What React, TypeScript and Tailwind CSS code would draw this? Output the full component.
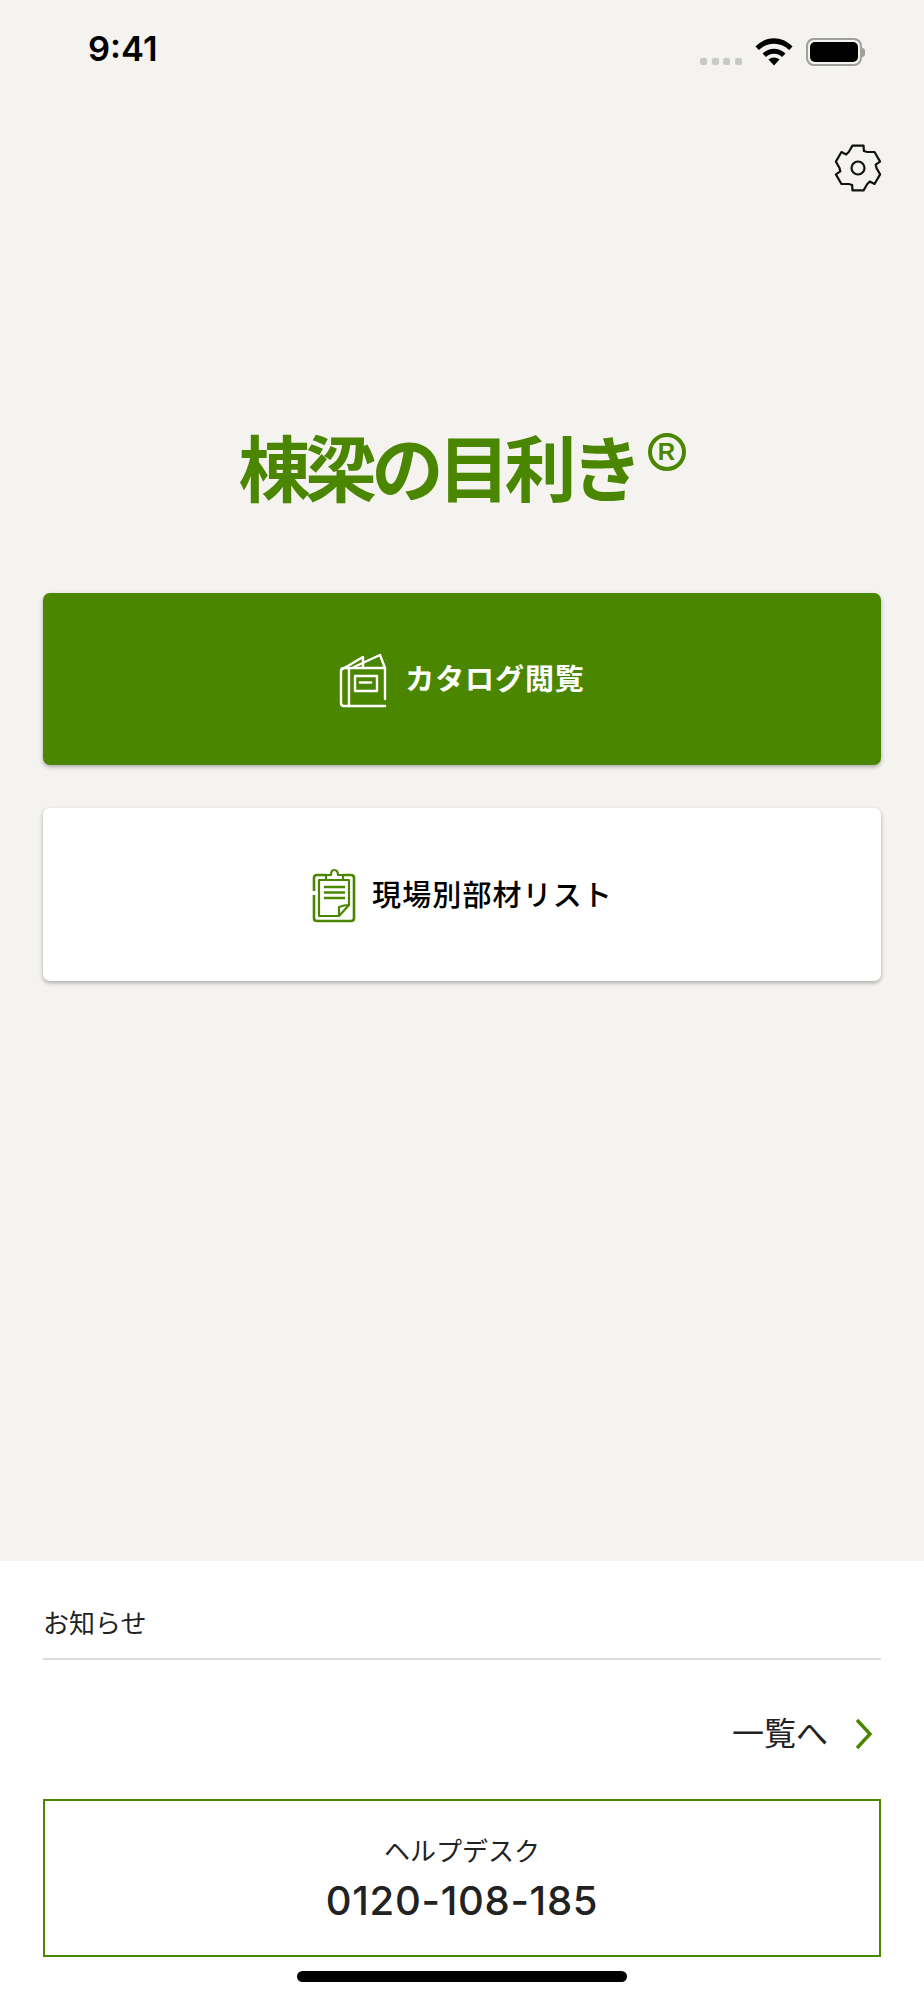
const JP = { fontFamily: '"Noto Sans CJK JP", sans-serif' };

function gearPath() {
  const pts: string[] = [];
  for (let i = 0; i < 6; i++) {
    const c = -90 + i * 60;
    const at = (deg: number, r: number) => {
      const a = ((c + deg) * Math.PI) / 180;
      return `${(33 + r * Math.cos(a)).toFixed(2)} ${(33 + r * Math.sin(a)).toFixed(2)}`;
    };
    pts.push(at(-14, 23), at(14, 23), at(19, 18), at(30, 18.5));
  }
  return `M${pts.join(' L')} Z`;
}

function Gear() {
  return (
    <svg width="66" height="66" viewBox="0 0 66 66" fill="none" stroke="#111" strokeWidth="2.2" strokeLinejoin="round">
      <path d={gearPath()} />
      <circle cx="33" cy="33" r="6.5" />
    </svg>
  );
}

function Wifi() {
  return (
    <svg width="38" height="28" viewBox="0 0 38 28" fill="#000">
      <path d="M0.5 8.5 C11 -2.5 27 -2.5 37.5 8.5 L34.2 12 C25.5 3.5 12.5 3.5 3.8 12 Z" />
      <path d="M7.5 15.5 C14 9 24 9 30.5 15.5 L27 19 C22.5 14.8 15.5 14.8 11 19 Z" />
      <path d="M13.5 21.5 C16.5 18.7 21.5 18.7 24.5 21.5 L19 27.5 Z" />
    </svg>
  );
}

function BookIcon() {
  return (
    <svg width="66" height="66" viewBox="0 0 66 66" fill="none" stroke="#fff" strokeWidth="2.4" strokeLinejoin="round" strokeLinecap="round">
      <path d="M55 60 H14 C12 60 11 59 11 57 V25 C11 23 12 22 14 22 H55 V53" />
      <path d="M19 22 V60" />
      <path d="M11 24 L33 11 L33 21" />
      <path d="M24 21 L50 9 L55 22" />
      <rect x="25" y="30" width="22" height="15" />
      <path d="M30 36.5 H41" />
    </svg>
  );
}

function ClipIcon() {
  return (
    <svg width="66" height="66" viewBox="0 0 66 66" fill="none" stroke="#4b8600" strokeWidth="2.2" strokeLinejoin="round">
      <path d="M24 13 H15 C13 13 12 14 12 16 V29 M12 33 V56 C12 58 13 59 15 59 H49 C51 59 52 58 52 56 V16 C52 14 51 13 49 13 H41" strokeWidth="2.6" />
      <path d="M24 13 H29 C29 9 30 8 32 8 C34 8 36 9 36 13 H41 V18 H24 Z" />
      <path d="M17 18 H24 M41 18 H47 V43 L37 54 H17 V18 Z" />
      <path d="M37 54 L37 45 C42 43 44 43 47 43" />
      <path d="M22 25 H43 M22 30.5 H43 M22 36 H43" strokeWidth="2.4" />
    </svg>
  );
}

export default function App() {
  return (
    <div className="relative flex h-[2000px] w-[924px] flex-col overflow-hidden bg-[#f4f3ef]" style={JP}>
      <div className="flex h-[135px] shrink-0 items-start justify-between pl-[88px] pr-[59px] pt-[26px]">
        <span className="text-[34.5px] font-semibold leading-[46px] text-black" style={{ fontFamily: 'Inter, sans-serif' }}>9:41</span>
        <div className="flex h-[40px] items-end pt-[12px]">
          <div className="mb-[1px] flex gap-[4.6px]">
            <span className="h-[7px] w-[7px] rounded-[2px] bg-[#c8c8c4]" />
            <span className="h-[7px] w-[7px] rounded-[2px] bg-[#c8c8c4]" />
            <span className="h-[7px] w-[7px] rounded-[2px] bg-[#c8c8c4]" />
            <span className="h-[7px] w-[7px] rounded-[2px] bg-[#c8c8c4]" />
          </div>
          <div className="ml-[13px]"><Wifi /></div>
          <div className="ml-[13px] flex items-center">
            <div className="h-[28px] w-[56px] rounded-[8px] border-2 border-[#a0a09a] p-[2px]">
              <div className="h-full w-full rounded-[5px] bg-black" />
            </div>
            <div className="h-[9px] w-[3px] rounded-r-[3px] bg-[#a0a09a]" />
          </div>
        </div>
      </div>

      <div className="flex h-[66px] shrink-0 justify-end pr-[33px]"><Gear /></div>

      <div className="mt-[214px] flex h-[100px] shrink-0 items-center justify-center">
        <div className="relative flex items-center pr-[48px]">
          <span className="whitespace-nowrap text-[72px] font-bold leading-[100px] tracking-[-5.5px] text-[#4b8600]">棟梁の目利き</span>
          <span className="absolute right-0 top-[18px] flex h-[38px] w-[38px] items-center justify-center rounded-full border-[4px] border-[#4b8600] text-[24px] font-bold leading-none text-[#4b8600]" style={{ fontFamily: '"Liberation Sans", sans-serif' }}>R</span>
        </div>
      </div>

      <div className="mt-[78px] flex h-[172px] shrink-0 flex-col px-[43px]">
        <div className="flex h-full items-center justify-center rounded-[7px] bg-[#4b8600] pr-[9px] shadow-[0_2px_4px_rgba(0,0,0,0.3)]">
          <BookIcon />
          <span className="mb-[2px] ml-[9px] text-[29px] font-bold tracking-[0.9px] text-white">カタログ閲覧</span>
        </div>
      </div>

      <div className="mt-[43px] flex h-[173px] shrink-0 flex-col px-[43px]">
        <div className="flex h-full items-center justify-center rounded-[7px] bg-white pr-[9px] shadow-[0_2px_4px_rgba(0,0,0,0.3)]">
          <ClipIcon />
          <span className="mb-[2px] ml-[4px] text-[29px] font-medium tracking-[1.1px] text-black">現場別部材リスト</span>
        </div>
      </div>

      <div className="mt-auto flex h-[439px] shrink-0 flex-col bg-white px-[43px]">
        <div className="flex h-[99px] shrink-0 items-end border-b-2 border-[#dddddd] pb-[18px]">
          <span className="text-[26px] leading-[36px] text-[#222]">お知らせ</span>
        </div>
        <div className="flex h-[94px] shrink-0 items-end justify-end pr-[7px]">
          <span className="text-[32px] leading-[46px] text-[#222]">一覧へ</span>
          <svg className="mb-[3px] ml-[26px]" width="20" height="34" viewBox="0 0 20 34" fill="none" stroke="#4b8600" strokeWidth="3.4">
            <path d="M3 3 L16 17 L3 31" />
          </svg>
        </div>
        <div className="mt-[45px] flex h-[158px] shrink-0 flex-col items-center border-2 border-[#4b8600]">
          <span className="mt-[31px] text-[26px] leading-[36px] text-[#222]">ヘルプデスク</span>
          <span className="mt-[8px] text-[40px] font-medium leading-[50px] tracking-[0.7px] text-[#222]" style={{ fontFamily: 'Inter, sans-serif' }}>0120-108-185</span>
        </div>
        <div className="mt-[14px] h-[11px] w-[330px] shrink-0 self-center rounded-full bg-black" />
      </div>
    </div>
  );
}
